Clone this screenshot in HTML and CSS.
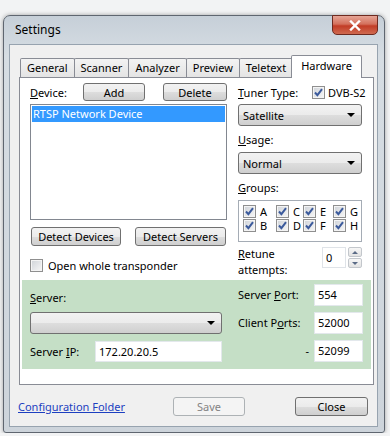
FILE: index.html
```html
<!DOCTYPE html>
<html lang="en">
<head>
    <meta charset="UTF-8">
    <meta name="viewport" content="width=device-width, initial-scale=1">
    <title>Settings</title>
    <link rel="stylesheet" href="styles.css">
</head>
<body>
    <div class="window">
        <div class="titlebar">
            <span class="title">Settings</span>
            <span class="close-x">
                <svg width="14" height="11" viewBox="0 0 14 11"><path d="M3 1.5 L11 9.5 M11 1.5 L3 9.5" stroke="#fff" stroke-width="2.4" stroke-linecap="square"/></svg>
            </span>
        </div>

        <div class="client">
            <div class="tabs">
                <div class="tab">General</div>
                <div class="tab">Scanner</div>
                <div class="tab">Analyzer</div>
                <div class="tab">Preview</div>
                <div class="tab">Teletext</div>
                <div class="tab active">Hardware</div>
            </div>

            <div class="panel">
                <div class="hw-grid">
                    <!-- device list -->
                    <div class="col-left">
                        <div class="device-row">
                            <span class="lbl-device"><u>D</u>evice:</span>
                            <button class="btn btn-add">Add</button>
                            <button class="btn btn-delete">Delete</button>
                        </div>
                        <div class="listbox">
                            <div class="list-item selected">RTSP Network Device</div>
                        </div>
                        <div class="detect-row">
                            <button class="btn btn-detect">Detect Devices</button>
                            <button class="btn btn-detect wide">Detect Servers</button>
                        </div>
                        <div class="check-line"><span class="chk"></span>Open whole transponder</div>
                    </div>

                    <!-- tuner settings -->
                    <div class="col-right">
                        <div class="tuner-row">
                            <span class="lbl-tuner"><u>T</u>uner Type:</span>
                            <span class="chk on"><svg viewBox="0 0 11 11"><path d="M2 5.5 L4.4 8.2 L9 2.2"/></svg></span>
                            <span class="dvb">DVB-S2</span>
                        </div>
                        <div class="combo">Satellite<span class="arrow"></span></div>
                        <div class="field-label"><u>U</u>sage:</div>
                        <div class="combo">Normal<span class="arrow"></span></div>
                        <div class="field-label"><u>G</u>roups:</div>
                        <div class="groups">
                            <div class="grp"><span class="chk on"><svg viewBox="0 0 11 11"><path d="M2 5.5 L4.4 8.2 L9 2.2"/></svg></span>A</div>
                            <div class="grp"><span class="chk on"><svg viewBox="0 0 11 11"><path d="M2 5.5 L4.4 8.2 L9 2.2"/></svg></span>B</div>
                            <div class="grp"><span class="chk on"><svg viewBox="0 0 11 11"><path d="M2 5.5 L4.4 8.2 L9 2.2"/></svg></span>C</div>
                            <div class="grp"><span class="chk on"><svg viewBox="0 0 11 11"><path d="M2 5.5 L4.4 8.2 L9 2.2"/></svg></span>D</div>
                            <div class="grp"><span class="chk on"><svg viewBox="0 0 11 11"><path d="M2 5.5 L4.4 8.2 L9 2.2"/></svg></span>E</div>
                            <div class="grp"><span class="chk on"><svg viewBox="0 0 11 11"><path d="M2 5.5 L4.4 8.2 L9 2.2"/></svg></span>F</div>
                            <div class="grp"><span class="chk on"><svg viewBox="0 0 11 11"><path d="M2 5.5 L4.4 8.2 L9 2.2"/></svg></span>G</div>
                            <div class="grp"><span class="chk on"><svg viewBox="0 0 11 11"><path d="M2 5.5 L4.4 8.2 L9 2.2"/></svg></span>H</div>
                        </div>
                        <div class="retune-row">
                            <span class="retune-label"><u>R</u>etune<br>attempts:</span>
                            <div class="spin">
                                <span class="spin-value">0</span>
                                <span class="spin-btns">
                                    <span class="spin-btn"><span class="tri-up"></span></span>
                                    <span class="spin-btn"><span class="tri-down"></span></span>
                                </span>
                            </div>
                        </div>
                    </div>
                </div>

                <!-- rtsp server -->
                <div class="server-box">
                    <span class="lbl-server"><u>S</u>erver:</span>
                    <span class="lbl-right">Server <u>P</u>ort:</span>
                    <div class="textbox">554</div>

                    <div class="combo combo-server"><span class="arrow"></span></div>
                    <span class="lbl-right">Client P<u>o</u>rts:</span>
                    <div class="textbox">52000</div>

                    <div class="ip-row">
                        <span class="lbl-ip">Server <u>I</u>P:</span>
                        <div class="textbox ip">172.20.20.5</div>
                    </div>
                    <span class="dash">-</span>
                    <div class="textbox">52099</div>
                </div>
            </div>

            <div class="footer">
                <a class="link" href="#">Configuration Folder</a>
                <button class="btn btn-save" disabled>Save</button>
                <button class="btn btn-close">Close</button>
            </div>
        </div>
    </div>
</body>
</html>
```

FILE: styles.css
```css
* {
     box-sizing: border-box;
 }

body {
     margin: 0;
     background: #f2f3f4;
     font-family: "Noto Sans", "Open Sans", sans-serif;
     font-size: 11px;
     color: #000;
 }

u {
     text-decoration: underline;
     text-underline-offset: 1px;
 }

.window {
     width: 382px;
     height: 418px;
     margin: 15px 0 0 3px;
     padding: 0 6px 5px 5px;
     border: 1px solid #5f6670;
     border-radius: 7px 7px 3px 3px;
     background: linear-gradient(#c6cfd8, #d6dde3 40px, #cdd4db);
     box-shadow: 0 0 4px rgba(0, 0, 0, 0.35);
     display: flex;
     flex-direction: column;
 }

.titlebar {
     height: 28px;
     display: flex;
     justify-content: space-between;
     align-items: flex-start;
 }

.title {
     padding-left: 6px;
     line-height: 28px;
     font-size: 12px;
 }

.close-x {
     width: 46px;
     height: 20px;
     margin-top: -1px;
     border: 1px solid #6e2a20;
     border-radius: 0 0 5px 5px;
     background: linear-gradient(#e6a596 0%, #d4705c 45%, #c23c26 55%, #cf6a50 100%);
     display: flex;
     justify-content: center;
     align-items: center;
 }

.client {
     height: 383px;
     border: 1px solid #97a3af;
     background: #f0f0f0;
     display: flex;
     flex-direction: column;
 }

/* tabs */
.tabs {
     height: 22px;
     margin-top: 10px;
     padding-left: 10px;
     display: flex;
     align-items: flex-end;
     position: relative;
     z-index: 1;
 }

.tab {
     height: 19px;
     padding: 0 6px;
     margin-right: -1px;
     line-height: 18px;
     white-space: nowrap;
     border: 1px solid #898c95;
     border-bottom: none;
     border-radius: 2px 2px 0 0;
     background: linear-gradient(#f3f3f3, #e4e4e4);
 }

.tab.active {
     height: 23px;
     margin: 0 -2px -1px -1px;
     padding: 0 9px;
     line-height: 20px;
     background: #fff;
     position: relative;
 }

.panel {
     height: 308px;
     margin: 0 3px 0 9px;
     padding: 5px 2px 0 2px;
     border: 1px solid #898c95;
     background: #fff;
 }

.hw-grid {
     padding: 0 9px 0 8px;
     display: grid;
     grid-template-columns: 197px 124px;
     column-gap: 11px;
 }

.col-left,
.col-right {
     display: flex;
     flex-direction: column;
 }

/* buttons */
.btn {
     font: inherit;
     height: 19px;
     padding: 0;
     color: #000;
     border: 1px solid #707070;
     border-radius: 3px;
     background: linear-gradient(#f2f2f2 0%, #ebebeb 50%, #dddddd 51%, #cfcfcf 100%);
 }

.device-row {
     height: 18px;
     display: flex;
     align-items: center;
 }

.lbl-device {
     width: 53px;
 }

.btn-add {
     width: 62px;
     height: 18px;
 }

.btn-delete {
     width: 64px;
     height: 18px;
     margin-left: 18px;
 }

.listbox {
     height: 116px;
     margin-top: 3px;
     padding: 1px;
     border: 1px solid #828790;
 }

.list-item {
     height: 16px;
     line-height: 16px;
     padding-left: 1px;
 }

.list-item.selected {
     background: #3399ff;
     color: #fff;
 }

.detect-row {
     margin-top: 7px;
     padding-left: 1px;
     display: flex;
     justify-content: space-between;
 }

.btn-detect {
     width: 90px;
 }

.btn-detect.wide {
     width: 91px;
     margin-right: 1px;
 }

.check-line {
     height: 13px;
     margin-top: 13px;
     display: flex;
     align-items: center;
 }

.chk {
     width: 13px;
     height: 13px;
     flex: none;
     border: 1px solid #8f8f8f;
     background: linear-gradient(135deg, #cfd3d8, #f7f7f7);
     box-shadow: inset 0 0 0 1px #f4f4f4;
     display: flex;
     justify-content: center;
     align-items: center;
 }

.chk svg {
     width: 11px;
     height: 11px;
 }

.chk svg path {
     fill: none;
     stroke: #3b5a9c;
     stroke-width: 2;
 }

.check-line .chk {
     margin-right: 5px;
 }

/* right column */
.tuner-row {
     height: 18px;
     white-space: nowrap;
     display: flex;
     align-items: center;
 }

.lbl-tuner {
     width: 74px;
     flex: none;
 }

.dvb {
     margin-left: 3px;
 }

.combo {
     height: 22px;
     margin-top: 3px;
     padding-left: 4px;
     border: 1px solid #707070;
     border-radius: 3px;
     background: linear-gradient(#f2f2f2 0%, #ebebeb 50%, #dddddd 51%, #cfcfcf 100%);
     display: flex;
     align-items: center;
 }

.arrow {
     margin-left: auto;
     margin-right: 6px;
     border-left: 4px solid transparent;
     border-right: 4px solid transparent;
     border-top: 4px solid #000;
 }

.field-label {
     height: 26px;
     padding-top: 7px;
     line-height: 14px;
 }

.field-label + .combo {
     margin-top: 0;
 }

.groups {
     height: 42px;
     padding: 3px 0 0 4px;
     border: 1px solid #a5acb5;
     display: grid;
     grid-template-columns: 33px 27px 30px auto;
     grid-template-rows: 14px 14px;
     grid-auto-flow: column;
 }

.grp {
     display: flex;
     align-items: center;
 }

.grp .chk {
     margin-right: 4px;
 }

.retune-row {
     height: 30px;
     margin-top: 4px;
     display: flex;
     justify-content: space-between;
 }

.retune-label {
     line-height: 16px;
 }

.spin {
     height: 21px;
     margin-top: 1px;
     display: flex;
 }

.spin-value {
     width: 24px;
     padding-left: 3px;
     line-height: 19px;
     border: 1px solid #dfe3e8;
 }

.spin-btns {
     width: 14px;
     margin-left: 2px;
     display: flex;
     flex-direction: column;
     gap: 1px;
 }

.spin-btn {
     height: 10px;
     border: 1px solid #c3c7cc;
     border-radius: 2px;
     background: linear-gradient(#f7f7f7, #e3e3e3);
     display: flex;
     justify-content: center;
     align-items: center;
 }

.tri-up {
     border-left: 3px solid transparent;
     border-right: 3px solid transparent;
     border-bottom: 3px solid #5a6b86;
 }

.tri-down {
     border-left: 3px solid transparent;
     border-right: 3px solid transparent;
     border-top: 3px solid #5a6b86;
 }

/* server section */
.server-box {
     height: 89px;
     margin-top: 4px;
     padding: 4px 8px 0 8px;
     background: #c5dfc6;
     display: grid;
     grid-template-columns: 208px 76px 49px;
     grid-template-rows: 22px 22px 22px;
     row-gap: 6px;
 }

.lbl-server {
     padding-top: 7px;
     line-height: 14px;
 }

.lbl-right {
     line-height: 22px;
 }

.textbox {
     height: 22px;
     padding-left: 3px;
     line-height: 20px;
     background: #fff;
     border: 1px solid #e3e8ec;
 }

.combo-server {
     width: 192px;
     margin-top: 0;
 }

.ip-row {
     display: flex;
     align-items: center;
 }

.lbl-ip {
     width: 65px;
 }

.textbox.ip {
     width: 127px;
     height: 21px;
     margin-top: 1px;
 }

.dash {
     padding-right: 5px;
     line-height: 22px;
     text-align: right;
 }

/* bottom */
.footer {
     flex: 1;
     padding: 12px 9px 0 8px;
     display: flex;
     align-items: flex-start;
 }

.link {
     line-height: 19px;
     color: #1c3fc0;
     text-decoration: underline;
 }

.btn-save {
     width: 72px;
     margin-left: auto;
     color: #838383;
     border-color: #adb2b5;
     background: #f4f4f4;
 }

.btn-close {
     width: 73px;
     margin-left: 50px;
 }
```
